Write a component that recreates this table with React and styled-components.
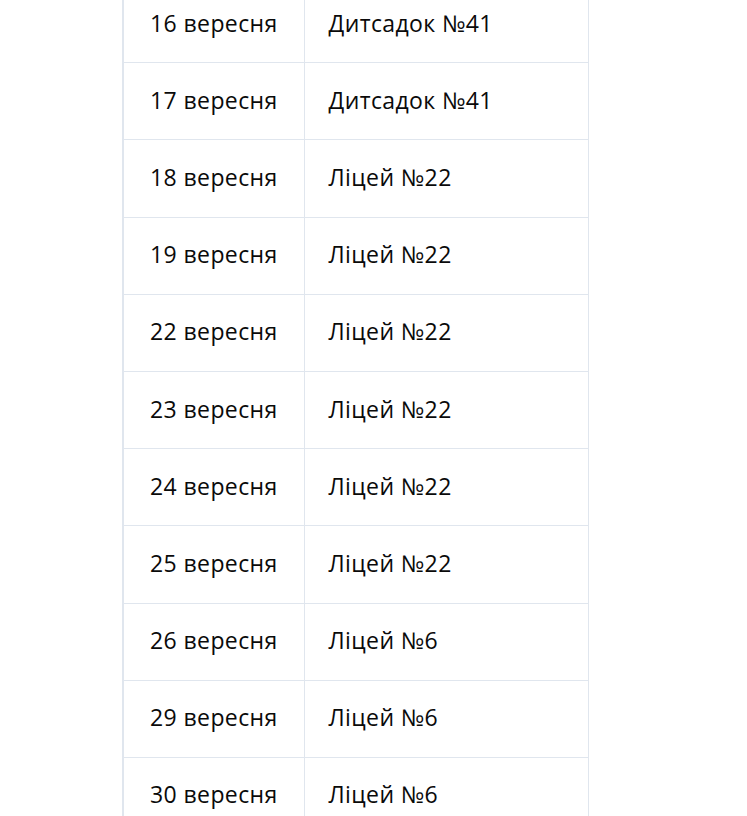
import React from "react";
import styled, { createGlobalStyle } from "styled-components";

const GlobalStyle = createGlobalStyle`
	html, body {
		margin: 0;
		padding: 0;
		background: #fff;
		overflow: hidden;
	}
	body {
		font-family: "Open Sans", "Noto Sans", sans-serif;
		color: #0a0a0a;
	}
`;

const rows = [
	["16 вересня", "Дитсадок №41"],
	["17 вересня", "Дитсадок №41"],
	["18 вересня", "Ліцей №22"],
	["19 вересня", "Ліцей №22"],
	["22 вересня", "Ліцей №22"],
	["23 вересня", "Ліцей №22"],
	["24 вересня", "Ліцей №22"],
	["25 вересня", "Ліцей №22"],
	["26 вересня", "Ліцей №6"],
	["29 вересня", "Ліцей №6"],
	["30 вересня", "Ліцей №6"],
];

export default function App() {
	return (
		<>
			<GlobalStyle />
			<Page>
				<Table>
					<tbody>
						{rows.map(([date, place]) => (
							<Row key={date}>
								<DateCell>{date}</DateCell>
								<PlaceCell>{place}</PlaceCell>
							</Row>
						))}
					</tbody>
				</Table>
			</Page>
		</>
	);
}

const Page = styled.div`
	height: 816px;
	overflow: hidden;
	padding-left: 122px;
`;

const Table = styled.table`
	margin-top: -15px;
	border-collapse: collapse;
	width: 467px;
	border-left: 2px solid #e0e6ee;
	font-size: 23px;
	letter-spacing: 0.4px;
`;

const Row = styled.tr`
	height: 77.2px;
`;

const Cell = styled.td`
	border: 1px solid #e0e6ee;
	vertical-align: middle;
	padding: 0 24px 3px;
	white-space: nowrap;
	text-align: left;
`;

const DateCell = styled(Cell)`
	width: 181px;
	box-sizing: border-box;
	padding-left: 26px;
	border-left: 2px solid #e0e6ee;
`;

const PlaceCell = styled(Cell)``;
